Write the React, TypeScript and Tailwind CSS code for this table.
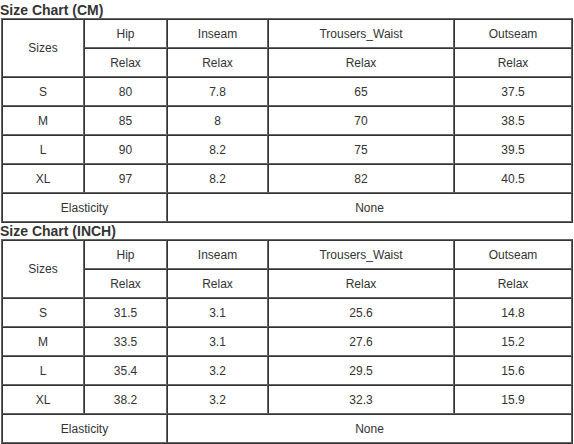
const headers = ["Hip", "Inseam", "Trousers_Waist", "Outseam"];

const charts = [
  {
    title: "Size Chart (CM)",
    rows: [
      ["S", "80", "7.8", "65", "37.5"],
      ["M", "85", "8", "70", "38.5"],
      ["L", "90", "8.2", "75", "39.5"],
      ["XL", "97", "8.2", "82", "40.5"],
    ],
  },
  {
    title: "Size Chart (INCH)",
    rows: [
      ["S", "31.5", "3.1", "25.6", "14.8"],
      ["M", "33.5", "3.1", "27.6", "15.2"],
      ["L", "35.4", "3.2", "29.5", "15.6"],
      ["XL", "38.2", "3.2", "32.3", "15.9"],
    ],
  },
];

const cell = "h-[29px] border border-t-[#333] border-l-[#333] border-r-[#666] border-b-[#666] p-0 text-center align-middle";

const SizeTable = ({ title, rows, first }: { title: string; rows: string[][]; first?: boolean }) => (
  <div>
    <h2 className={first ? "pt-[2px] text-[14px] font-bold leading-4 text-[#333]" : "text-[14px] font-bold leading-4 text-[#333]"}>
      {title}
    </h2>
    <table className="ml-[1px] w-[572px] table-fixed border-separate border-spacing-0 border border-t-[#666] border-l-[#666] border-r-[#333] border-b-[#333] text-[12px] text-[#333]">
      <colgroup>
        <col className="w-[82px]" />
        <col className="w-[83px]" />
        <col className="w-[101px]" />
        <col className="w-[186px]" />
        <col className="w-[118px]" />
      </colgroup>
      <tbody>
        <tr>
          <td rowSpan={2} className={cell}>Sizes</td>
          {headers.map((h) => (
            <td key={h} className={cell}>{h}</td>
          ))}
        </tr>
        <tr>
          {headers.map((h) => (
            <td key={h} className={cell}>Relax</td>
          ))}
        </tr>
        {rows.map((r) => (
          <tr key={r[0]}>
            {r.map((v, i) => (
              <td key={i} className={cell}>{v}</td>
            ))}
          </tr>
        ))}
        <tr>
          <td colSpan={2} className={cell}>Elasticity</td>
          <td colSpan={3} className={cell}>None</td>
        </tr>
      </tbody>
    </table>
  </div>
);

export default function App() {
  return (
    <div className="min-h-[444px] w-[574px] bg-white font-['Liberation_Sans',Arial,sans-serif]">
      {charts.map((c, i) => (
        <SizeTable key={c.title} title={c.title} rows={c.rows} first={i === 0} />
      ))}
    </div>
  );
}
